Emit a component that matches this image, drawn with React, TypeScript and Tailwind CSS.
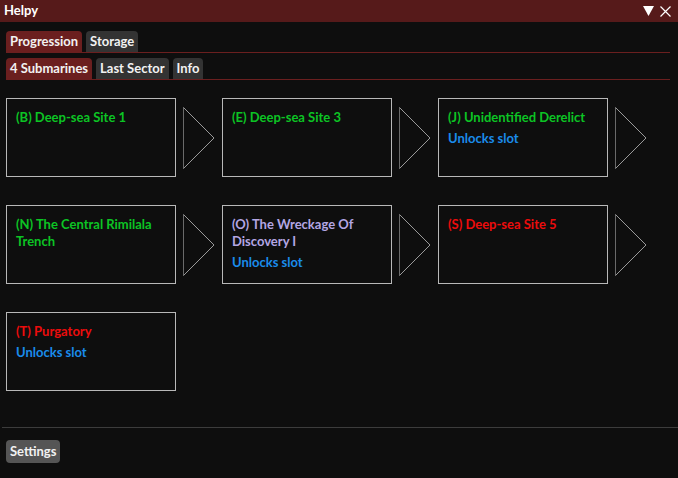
import React from 'react';

type Site = { title: string; color: string; unlocks?: boolean; arrow: boolean };

const rows: Site[][] = [
  [
    { title: '(B) Deep-sea Site 1', color: 'text-[#0cc424]', arrow: true },
    { title: '(E) Deep-sea Site 3', color: 'text-[#0cc424]', arrow: true },
    { title: '(J) Unidentified Derelict', color: 'text-[#0cc424]', unlocks: true, arrow: true },
  ],
  [
    { title: '(N) The Central Rimilala Trench', color: 'text-[#0cc424]', arrow: true },
    { title: '(O) The Wreckage Of Discovery I', color: 'text-[#b3a6e4]', unlocks: true, arrow: true },
    { title: '(S) Deep-sea Site 5', color: 'text-[#ec0c0c]', arrow: true },
  ],
  [{ title: '(T) Purgatory', color: 'text-[#ec0c0c]', unlocks: true, arrow: false }],
];

const Arrow = () => (
  <svg width="32" height="62" viewBox="0 0 32 62" className="mx-[7px] shrink-0">
    <line x1="0.5" y1="0.5" x2="0.5" y2="61.5" stroke="#6a6a6a" strokeWidth="1" />
    <line x1="0.5" y1="0.5" x2="31" y2="31" stroke="#9a9a9a" strokeWidth="1" />
    <line x1="31" y1="31" x2="0.5" y2="61.5" stroke="#9a9a9a" strokeWidth="1" />
  </svg>
);

const Tab = ({ label, active }: { label: string; active?: boolean }) => (
  <div
    className={`h-[21px] px-[4px] flex items-center rounded-t-[4px] text-[#f2f2f2] ${
      active ? 'bg-[#6b1f1f]' : 'bg-[#333333]'
    }`}
  >
    {label}
  </div>
);

export default function App() {
  return (
    <div
      className="w-[678px] h-[478px] bg-[#0e0e0e] flex flex-col text-[13px] font-bold overflow-hidden"
      style={{ fontFamily: 'Lato, "Noto Sans", sans-serif' }}
    >
      <div className="h-[22px] bg-[#561a1a] flex items-center justify-between pl-[4px] pr-[7px] text-white shrink-0">
        <span>Helpy</span>
        <div className="flex items-center gap-[6px]">
          <svg width="11" height="10" viewBox="0 0 11 10">
            <polygon points="0,0 11,0 5.5,10" fill="#ffffff" />
          </svg>
          <svg width="11" height="11" viewBox="0 0 11 11">
            <path d="M0.5 0.5 L10.5 10.5 M10.5 0.5 L0.5 10.5" stroke="#ffffff" strokeWidth="1.2" />
          </svg>
        </div>
      </div>

      <div className="pl-[6px] pr-[8px] pt-[9px] flex flex-col shrink-0">
        <div className="flex gap-[4px] leading-none">
          <Tab label="Progression" active />
          <Tab label="Storage" />
        </div>
        <div className="h-px bg-[#6b1f1f]" />
        <div className="flex gap-[4px] mt-[5px] leading-none">
          <Tab label="4 Submarines" active />
          <Tab label="Last Sector" />
          <Tab label="Info" />
        </div>
        <div className="h-px bg-[#6b1f1f]" />
      </div>

      <div className="pl-[6px] pt-[18px] flex flex-col gap-[28px] h-[347px] shrink-0">
        {rows.map((row, i) => (
          <div key={i} className="flex items-center">
            {row.map((s, j) => (
              <div key={j} className="flex items-center">
                <div className="w-[170px] h-[79px] border border-[#b8b8b8] pl-[9px] pr-[6px] pt-[10px] leading-[17px]">
                  <div className={s.color}>{s.title}</div>
                  {s.unlocks && <div className="text-[#1a8ceb] mt-[4px]">Unlocks slot</div>}
                </div>
                {s.arrow && <Arrow />}
              </div>
            ))}
          </div>
        ))}
      </div>

      <div className="ml-[2px] h-px bg-[#3c3c3c] shrink-0" />
      <div className="pl-[6px] pt-[12px]">
        <button className="h-[23px] px-[4px] bg-[#555555] rounded-[4px] text-[#f2f2f2] leading-none">
          Settings
        </button>
      </div>
    </div>
  );
}
